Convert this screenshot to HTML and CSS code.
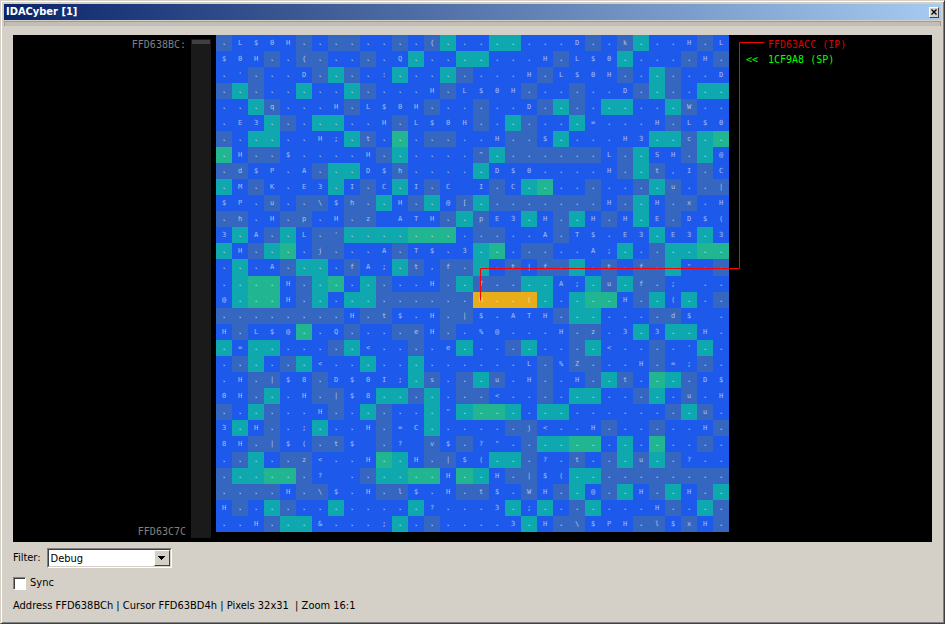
FILE: index.html
```html
<!DOCTYPE html>
<html lang="en">
<head>
<meta charset="utf-8">
<title>IDACyber [1]</title>
<link rel="stylesheet" href="styles.css">
</head>
<body>
<div class="window">
  <header class="titlebar">
    <h1 class="title">IDACyber [1]</h1>
    <button class="close" type="button" aria-label="Close">
      <svg viewBox="0 0 6 6" width="6" height="6" aria-hidden="true"><path d="M.5 .5L5.5 5.5M5.5 .5L.5 5.5" stroke="#000" stroke-width="1.3"/></svg>
    </button>
  </header>
  <div class="groove"></div>
  <main class="content">
    <section class="viewer">
      <div class="side side-left">
        <div class="addresses"><span>FFD638BC:</span><span>FFD63C7C</span></div>
        <div class="track"><div class="thumb"></div></div>
      </div>
      <div class="map">
        <div class="pixels" id="pixels"></div>
        <svg class="pointer" viewBox="0 0 550 270" width="550" height="270" aria-hidden="true"><path d="M264 265V233H523V7H548" fill="none" stroke="#ff0000" transform="translate(.5 .5)"/></svg>
      </div>
      <div class="side side-right">
        <div class="note ip"><span class="mark"></span><span>FFD63ACC (IP)</span></div>
        <div class="note sp"><span class="mark">&lt;&lt;</span><span>1CF9A8 (SP)</span></div>
      </div>
    </section>
    <div class="filter">
      <label for="filter">Filter:</label>
      <div class="combo">
        <select id="filter"><option>Debug</option></select>
        <span class="drop"><svg viewBox="0 0 7 4" width="7" height="4" shape-rendering="crispEdges" aria-hidden="true"><path d="M0 0h7v1h-1v1h-1v1h-1v1h-1v-1h-1v-1h-1v-1h-1z"/></svg></span>
      </div>
    </div>
    <div class="sync">
      <input type="checkbox" id="sync">
      <label for="sync">Sync</label>
    </div>
    <footer class="status">Address FFD638BCh | Cursor FFD63BD4h | Pixels 32x31 &nbsp;| Zoom 16:1</footer>
  </main>
</div>
<script src="pixels.js"></script>
</body>
</html>
```
FILE: styles.css
```css
* { box-sizing: border-box; }

body {
  margin: 0;
  background: #d4d0c8;
  color: #000;
  font: 11px/14px "DejaVu Sans Condensed", "DejaVu Sans", sans-serif;
}

.window {
  min-height: 100vh;
  padding: 2px 2px 1px 2px;
  border: 1px solid #d4d0c8;
  border-right-color: #404040;
  border-bottom-color: #404040;
  box-shadow: inset 1px 1px #fff, inset -1px -1px #808080;
}

.titlebar {
  display: flex;
  align-items: center;
  justify-content: space-between;
  height: 16px;
  margin: 1px 1px 0;
  padding: 0 2px;
  background: linear-gradient(90deg, #0a246a, #a6caf0);
}

.title {
  margin: 0;
  color: #fff;
  font-size: 11px;
  line-height: 16px;
  font-weight: bold;
}

.close {
  display: flex;
  align-items: center;
  justify-content: center;
  width: 10px;
  height: 11px;
  padding: 0;
  border: 1px solid;
  border-color: #fff #404040 #404040 #fff;
  background: #d4d0c8;
}

.groove {
  height: 5px;
  margin: 1px 1px 0;
  border: 1px solid #a09c94;
  border-bottom: 0;
  background: #c2beb6;
}

.content { padding: 9px 10px 0; }

.viewer {
  display: grid;
  grid-template-columns: 1fr auto 1fr;
  padding-bottom: 10px;
  background: #000;
  font: 10px/12px "DejaVu Sans Mono", monospace;
}

.side { display: flex; }

.side-left {
  justify-content: flex-end;
  gap: 5px;
  margin-bottom: -6px;
  padding: 4px 5px 0 0;
}

.addresses {
  display: flex;
  flex-direction: column;
  align-items: flex-end;
  justify-content: space-between;
  color: #808080;
}

.track {
  width: 20px;
  padding: 1px;
  background: #1a1a1a;
}

.thumb {
  height: 4px;
  background: #404040;
}

.side-right {
  flex-direction: column;
  gap: 3px;
  padding: 4px 0 0 17px;
}

.note { display: flex; }
.mark { width: 22px; }
.ip { color: #dc0000; }
.sp { color: #00ff00; }

.map { position: relative; }

.pixels {
  display: grid;
  grid-template-columns: repeat(15, 16px) 17px repeat(16, 16px);
  grid-template-rows: repeat(14, 16px) 17px repeat(16, 16px);
  color: rgba(255, 255, 255, .6);
  font-size: 7px;
  line-height: 16px;
  text-align: center;
}

.pixels span { overflow: hidden; }
.pixels .dot { font-weight: bold; }
.B { background: #1d5aec; }
.S { background: #3667c0; }
.T { background: #0fa8ae; }
.G { background: #22b591; }
.O { background: #e9ad1c; }

.pointer {
  position: absolute;
  top: 0;
  left: 0;
  overflow: visible;
  pointer-events: none;
}

.filter {
  display: flex;
  align-items: center;
  gap: 6px;
  margin-top: 6px;
}

.combo {
  position: relative;
  width: 125px;
  height: 20px;
  border: 1px solid;
  border-color: #808080 #fff #fff #808080;
}

.combo select {
  display: block;
  width: 100%;
  height: 100%;
  padding: 1px 20px 0 2px;
  border: 1px solid;
  border-color: #404040 #d4d0c8 #d4d0c8 #404040;
  border-radius: 0;
  appearance: none;
  background: #fff;
  color: #000;
  font: inherit;
}

.drop {
  position: absolute;
  top: 1px;
  right: 1px;
  bottom: 1px;
  display: flex;
  align-items: center;
  justify-content: center;
  width: 16px;
  border: 1px solid;
  border-color: #fff #404040 #404040 #fff;
  background: #d4d0c8;
  pointer-events: none;
}

.sync {
  display: flex;
  align-items: center;
  gap: 4px;
  margin-top: 8px;
}

.sync input {
  width: 13px;
  height: 13px;
  margin: 0;
  border: 1px solid;
  border-color: #808080 #fff #fff #808080;
  box-shadow: inset 1px 1px #404040;
  appearance: none;
  background: #fff;
}

.status { margin-top: 9px; }
```
FILE: pixels.js
```js
// One entry per memory row: colour classes, then the printable bytes.
const rows = [
  ["SBBBBSBSSBBSBSTBBTTBBBBSBSTBBBSB", ".L$0H........{........D..k...H.L"],
  ["BBBSBSSBBSBBTBBTTBBBBSBBBTBBBSBS", "$0H..{.....Q........H.L$0.....H."],
  ["BBSBBBSTSBBTBBTSBBBBSBBBBSBTSBBB", ".'...D....:........H.L$0H......D"],
  ["STSBBTBBTSBBBBSBBBBSBBSBBBSTSBTT", ".............H.L$0H......D......"],
  ["BBTSBBBBSBBBBSBBSBBBSTSBTTBBTSBB", "...q...H.L$0H......D.........W.."],
  ["BBBTSBTTBBBSBBBBSBTSBBTBBBBBSBBB", ".E3.......H.L$0H.......=...H.L$0"],
  ["SBTTBBBBTSBGBSSBBBSSBTBBBBBTTSTG", "......H;.t.......H..$....H3..c.."],
  ["GBSSBBBBBBSTBBBBSTSSSSSSBSTBBSTB", ".H..$....H......^.......L..SH..@"],
  ["SSBBBBSTTBBSBBBBTBBBBBBBBSTSBBSB", ".d$P.A...D$h.....D$0....H..t,I.C"],
  ["TBSBBBBTBSBTBSBBBSBTGBBSBBSTSBSS", ".M.K.E3.I.C.I.C I.C.........u..|"],
  ["BBBSBSSBSSTBSTBSTSSSSSSSBSTBSSBB", "$P.u..\\$h..H..@[........H..H.x.H"],
  ["SSBBSSBBSSBBBBSTSBBTBSTBSBTBSBBB", ".h.H.p.H.z ATH..pE3.H..H.H.E.D$("],
  ["BTBSTBSSTTTTGGGBSSBBBSBBBBBTBBTB", "3.A..L.'............A.T$.E3.E3.3"],
  ["TBSTGBSSBBBSBBBBTGBSSBBBBTBSTTGG", ".H....j...A.T$.3.......A;......."],
  ["BTBBSTTBSBBTSBSSTBSBSSTBSBSSTBBS", "...A....fA;.t,f...t|f...t.f..\".."],
  ["BTGGBSTGBTSBBBSTSSSTTBBTSTSSBBBB", "....H........H..f....A;.u.f.; .."],
  ["BTGGBSTBTTSSSSSSOOOOTBTGGBSTBTBS", "@...H...........H..(.....H..(..."],
  ["SSSSSSSSBSSBBBSSBBBBBSTTBBBSSBBB", "........H.t$.H.|$.ATH.......d$ ."],
  ["BSBBBGBBSBBSSBSBBBBBBBSSBBTBTTBB", "H.L$@..Q....eH..%@...H.z.3.3..H."],
  ["TBTTBBBSTBBBSBBTBBSTBBSTBBBSBBTB", ".=.......<....e.........<....'.."],
  ["BSTBSTBBBTBBTBBBBBBBSBSSBBBSBBSB", "......<............L.%Z...H.=;.."],
  ["BBSSBBSBBBBBTSBSTSBBSBBSTSBGTSBB", ".H.|$8.D$0I;.s...u.H..H..t....D$"],
  ["BBSTBBSSBBTTSTBSSBBBSBTTBBSTBSBB", "0H...H.|$8.......<...........u.H"],
  ["SBTSBBBSBTSBBTBTGGTBTTBBBBBBSTSB", "......H.......\"...............u."],
  ["BTBSBBTBBBSBBTBBBBSSBBBBSBBSBBBS", "3.H..;...H.=C......j<..H......H."],
  ["BBSSBBSSBBSBBSBSBBBSTTGGBTBGBBSB", "8H.|$(.t$ .? v$.?\".............."],
  ["BSTBSSBBBBGTBSSBBTTSBBSBSTSTSBBB", ".....z<..H..H.|$(...?.t...u..?.."],
  ["STTGGSBBBSTTGGBGTBSSBBTTSSSSSSSS", "......? ......H..H.|$(.........."],
  ["SSSSBSSBBBSSBBBSSBBSBSTBSTBSTBST", "....H.\\$.H.l$.H.t$.WH..@..H..H.."],
  ["BSBTSBBTBBBBTBBBBBTBTBSTBBBBSBTS", "H............?...3.;.......H...."],
  ["BBBSTTBBBBBTBSBBBBBTBSSBBBSSBSBS", "..H...&...;.......3.H.\\$PH.l$xH."]
];

const pixels = document.getElementById("pixels");
for (const [colours, bytes] of rows) {
  for (let i = 0; i < colours.length; i++) {
    const cell = document.createElement("span");
    cell.className = colours[i];
    if (bytes[i] === ".") cell.classList.add("dot");
    cell.textContent = bytes[i];
    pixels.append(cell);
  }
}
```
